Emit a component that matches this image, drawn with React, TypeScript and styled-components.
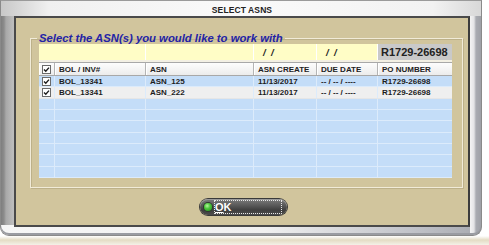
import React from 'react'
import styled, { createGlobalStyle } from 'styled-components'

const GlobalStyle = createGlobalStyle`
  html, body {
    margin: 0;
    padding: 0;
    background: #ffffff;
  }
  body {
    width: 489px;
    height: 245px;
    overflow: hidden;
    font-family: 'Liberation Sans', Arial, sans-serif;
  }
`

const COLS = '16px 91px 108px 63px 61px 74px'

const Page = styled.div`
  width: 489px;
  height: 245px;
  background: linear-gradient(to bottom, #ffffff 0, #ffffff 236px, #e4dcc4 240px, #f4f1e8 245px);
`

const Frame = styled.div`
  box-sizing: border-box;
  width: 482px;
  height: 236px;
  display: flex;
  flex-direction: column;
  padding: 0 11px 8px 13px;
  border-radius: 0 0 9px 9px;
  border: 1px solid #8a8a8a;
  border-top-color: #9a9a9a;
  background:
    linear-gradient(to right, #7e7e7e 0, #8c8c8c 3px, #a8a8a8 5px, #bdbdbd 12px, #bdbdbd 13px) left top / 13px calc(100% - 10px) no-repeat,
    linear-gradient(to left, #9fa1a7 0, #a9abb1 5px, #e4e4e6 7px, #f4f4f4 11px) right top / 11px 100% no-repeat,
    linear-gradient(to right, #f6f6f6 0%, #f0f0f0 55%, #c2c4ca 85%, #a8aab0 100%);
  box-shadow: inset 0 -2px 0 #9a9ca2;
`

const TitleBar = styled.div`
  height: 13px;
  display: flex;
  align-items: center;
  justify-content: center;
  font-size: 8.5px;
  font-weight: bold;
  color: #222222;
  letter-spacing: 0.1px;
  padding-top: 2px;
  background: linear-gradient(to right, #c8c8c8 0%, #f0f0f0 10%, #fafafa 50%, #f2f2f2 90%, #d8d8d8 100%);
  margin: 0 -11px 0 -13px;
  padding-left: 13px;
  padding-right: 11px;
`

const Panel = styled.div`
  flex: 1;
  display: flex;
  flex-direction: column;
  align-items: center;
  border: 2px solid #4a4a4a;
  border-right-color: #3c3c3c;
  background: #d1c59d;
`

const GroupBox = styled.fieldset`
  box-sizing: border-box;
  align-self: flex-start;
  width: 433px;
  margin: 15px 0 0 14px;
  padding: 0 10px 9px 8px;
  border: 1px solid #f1ebd8;
  box-shadow: inset 1px 1px 0 #bdb18a, 1px 1px 0 #bdb18a;
  min-width: 0;
`

const Legend = styled.legend`
  margin-left: -2px;
  padding: 0 2px;
  font-size: 11.3px;
  line-height: 11px;
  font-weight: bold;
  font-style: italic;
  color: #2323a6;
`

const Grid = styled.div`
  display: flex;
  flex-direction: column;
  width: 413px;
`

const FilterRow = styled.div`
  display: grid;
  grid-template-columns: ${COLS};
  height: 16px;
  border-bottom: 2px solid #f3f0e4;
`

const FilterCell = styled.div<{ $span?: number; $gray?: boolean }>`
  grid-column: span ${({ $span }) => $span ?? 1};
  display: flex;
  align-items: center;
  background: ${({ $gray }) => ($gray ? '#c9c9c9' : '#fffdc6')};
  border-right: 1px solid #ffffff;
  padding-left: ${({ $gray }) => ($gray ? '3px' : '9px')};
  font-size: ${({ $gray }) => ($gray ? '11px' : '9.5px')};
  font-weight: bold;
  font-style: ${({ $gray }) => ($gray ? 'normal' : 'italic')};
  color: #222222;
  white-space: pre;
  &:last-child {
    border-right: none;
  }
`

const HeaderRow = styled.div`
  display: grid;
  grid-template-columns: ${COLS};
  box-sizing: border-box;
  height: 14px;
  border-top: 1px solid #a8a8a8;
  border-bottom: 1px solid #a8a8a8;
  background: linear-gradient(to bottom, #fdfdfd, #ececec);
`

const HeaderCell = styled.div<{ $center?: boolean }>`
  display: flex;
  align-items: center;
  justify-content: ${({ $center }) => ($center ? 'center' : 'flex-start')};
  padding-left: ${({ $center }) => ($center ? '0' : '4px')};
  border-right: 1px solid #b4b4b4;
  box-shadow: inset 1px 0 0 #ffffff;
  font-size: 8px;
  font-weight: bold;
  color: #222222;
  white-space: nowrap;
  &:last-child {
    border-right: none;
  }
`

const Body = styled.div`
  background: #c4ddf8;
`

const Row = styled.div<{ $alt?: boolean }>`
  display: grid;
  grid-template-columns: ${COLS};
  box-sizing: border-box;
  height: 11.33px;
  background: ${({ $alt }) => ($alt ? '#efefef' : '#c4ddf8')};
  border-bottom: 1px solid ${({ $alt }) => ($alt ? '#e6e6e6' : '#dcebfb')};
`

const Cell = styled.div<{ $center?: boolean }>`
  display: flex;
  align-items: center;
  justify-content: ${({ $center }) => ($center ? 'center' : 'flex-start')};
  padding-left: ${({ $center }) => ($center ? '0' : '4px')};
  border-right: 1px solid #dcebfb;
  font-size: 8px;
  font-weight: bold;
  color: #1c1c1c;
  white-space: nowrap;
  overflow: hidden;
  &:last-child {
    border-right: none;
  }
`

const Box = styled.span`
  box-sizing: border-box;
  width: 9px;
  height: 9px;
  display: inline-flex;
  align-items: center;
  justify-content: center;
  background: #ffffff;
  border: 1px solid #6a6a6a;
`

const ButtonBar = styled.div`
  margin-top: 11px;
  display: flex;
  justify-content: center;
  width: 100%;
  padding-left: 3px;
`

const OkButton = styled.button`
  box-sizing: border-box;
  width: 87px;
  height: 16px;
  display: flex;
  align-items: center;
  gap: 1px;
  padding: 0 5px 0 4px;
  border: none;
  border-radius: 8px;
  background: linear-gradient(to bottom, #7c7c7c 0%, #5e5e5e 35%, #3e3e3e 70%, #4c4c4c 100%);
  box-shadow: 0 0 0 1px #3a3a3a, inset 0 1px 0 #9a9a9a;
  font-family: 'Liberation Sans', Arial, sans-serif;
  cursor: pointer;
`

const Led = styled.span`
  width: 8px;
  height: 8px;
  border-radius: 50%;
  flex: none;
  background: radial-gradient(circle at 40% 35%, #b8f4a0 0, #4cc83c 40%, #1f8a1a 100%);
  box-shadow: 0 0 0 1px #2c3a2c;
`

const Focus = styled.span`
  flex: 1;
  height: 12px;
  display: flex;
  align-items: center;
  border: 1px dotted #e8e8e8;
  font-size: 11px;
  font-weight: bold;
  color: #ffffff;
  line-height: 12px;
  margin-left: 1px;
`

const Mnemonic = styled.span`
  text-decoration: underline;
  text-underline-offset: 1px;
`

function Check() {
  return (
    <Box>
      <svg width="7" height="7" viewBox="0 0 7 7">
        <path d="M1 3.4 L2.8 5.2 L6 1.6" fill="none" stroke="#1a1a1a" strokeWidth="1.4" />
      </svg>
    </Box>
  )
}

const rows = [
  { bol: 'BOL_13341', asn: 'ASN_125', created: '11/13/2017', due: '-- / -- / ----', po: 'R1729-26698' },
  { bol: 'BOL_13341', asn: 'ASN_222', created: '11/13/2017', due: '-- / -- / ----', po: 'R1729-26698' },
]

const EMPTY_ROWS = 7

export default function App() {
  return (
    <Page>
      <GlobalStyle />
      <Frame>
        <TitleBar>SELECT ASNS</TitleBar>
        <Panel>
          <GroupBox>
            <Legend>Select the ASN(s) you would like to work with</Legend>
            <Grid>
              <FilterRow>
                <FilterCell $span={2} />
                <FilterCell />
                <FilterCell>{'/  /'}</FilterCell>
                <FilterCell>{'/  /'}</FilterCell>
                <FilterCell $gray>R1729-26698</FilterCell>
              </FilterRow>
              <HeaderRow>
                <HeaderCell $center>
                  <Check />
                </HeaderCell>
                <HeaderCell>BOL / INV#</HeaderCell>
                <HeaderCell>ASN</HeaderCell>
                <HeaderCell>ASN CREATE</HeaderCell>
                <HeaderCell>DUE DATE</HeaderCell>
                <HeaderCell>PO NUMBER</HeaderCell>
              </HeaderRow>
              <Body>
                {rows.map((r, i) => (
                  <Row key={i} $alt={i % 2 === 1}>
                    <Cell $center>
                      <Check />
                    </Cell>
                    <Cell>{r.bol}</Cell>
                    <Cell>{r.asn}</Cell>
                    <Cell>{r.created}</Cell>
                    <Cell>{r.due}</Cell>
                    <Cell>{r.po}</Cell>
                  </Row>
                ))}
                {Array.from({ length: EMPTY_ROWS }).map((_, i) => (
                  <Row key={`e${i}`}>
                    <Cell />
                    <Cell />
                    <Cell />
                    <Cell />
                    <Cell />
                    <Cell />
                  </Row>
                ))}
              </Body>
            </Grid>
          </GroupBox>
          <ButtonBar>
            <OkButton>
              <Led />
              <Focus>
                <Mnemonic>O</Mnemonic>K
              </Focus>
            </OkButton>
          </ButtonBar>
        </Panel>
      </Frame>
    </Page>
  )
}
